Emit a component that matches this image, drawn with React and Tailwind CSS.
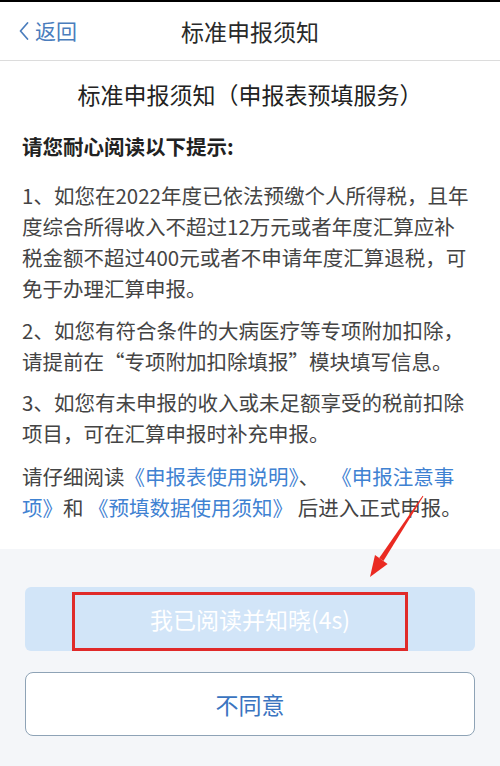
const font = { fontFamily: '"Noto Sans CJK SC", "Noto Sans", sans-serif' };

function Link({ children }) {
  return <span className="text-[#3f82d2]">{children}</span>;
}

export default function App() {
  return (
    <div className="relative flex h-[766px] w-[500px] flex-col overflow-hidden bg-white" style={font}>
      <div className="h-[2px] bg-black" />

      {/* nav bar */}
      <div className="relative flex h-[59px] items-center justify-center border-b border-[#dcdcdc]">
        <div className="absolute left-[19px] top-0 flex h-full items-center gap-[6px] text-[21px] text-[#4a7dbd]">
          <svg width="10" height="18" viewBox="0 0 10 18" fill="none">
            <path d="M8.5 1 L1.5 9 L8.5 17" stroke="#4a7dbd" strokeWidth="1.7" strokeLinecap="round" strokeLinejoin="round" />
          </svg>
          <span>返回</span>
        </div>
        <h1 className="text-[23px] text-[#2a2a2a]">标准申报须知</h1>
      </div>

      {/* content */}
      <div className="flex h-[488px] flex-col px-[22px] pt-[17px] text-[20.5px] leading-[31px] text-[#444]">
        <h2 className="text-center text-[23px] leading-[32px] text-[#222]">标准申报须知（申报表预填服务）</h2>
        <p className="mt-[21px] font-bold text-[#222]">请您耐心阅读以下提示:</p>
        <p className="mt-[18px] whitespace-nowrap">
          1、如您在2022年度已依法预缴个人所得税，且年<br />
          度综合所得收入不超过12万元或者年度汇算应补<br />
          税金额不超过400元或者不申请年度汇算退税，可<br />
          免于办理汇算申报。
        </p>
        <p className="mt-[11px] whitespace-nowrap">
          2、如您有符合条件的大病医疗等专项附加扣除，<br />
          请提前在“专项附加扣除填报”模块填写信息。
        </p>
        <p className="mt-[10px] whitespace-nowrap">
          3、如您有未申报的收入或未足额享受的税前扣除<br />
          项目，可在汇算申报时补充申报。
        </p>
        <p className="mt-[12px] whitespace-nowrap">
          请仔细阅读<Link>《申报表使用说明》</Link>、<span className="inline-block w-[12px]" />
          <Link>《申报注意事</Link>
          <br />
          <Link>项》</Link>和 <Link>《预填数据使用须知》</Link> 后进入正式申报。
        </p>
      </div>

      {/* bottom actions */}
      <div className="flex flex-1 flex-col gap-[21px] bg-[#f4f6f9] px-[25px] pt-[38px]">
        <div className="relative">
          <button className="flex h-[64px] w-full items-center justify-center rounded-[6px] bg-[#d2e5f8] text-[23px] text-white">
            我已阅读并知晓(4s)
          </button>
          <div className="pointer-events-none absolute left-[47px] top-[5px] h-[59px] w-[336px] border-[3px] border-[#e02a2a]" />
        </div>
        <button className="flex h-[64px] w-full items-center justify-center rounded-[8px] border border-[#8ea3b6] bg-white text-[23px] text-[#3a74c0]">
          不同意
        </button>
      </div>

      {/* annotation arrow */}
      <svg className="pointer-events-none absolute left-0 top-0" width="500" height="766" viewBox="0 0 500 766">
        <polygon points="423.4,496.3 422.6,495.7 379.2,558.1 383.4,560.9" fill="#ea2a22" />
        <polygon points="370,577 387.6,564 375,555" fill="#ea2a22" />
      </svg>
    </div>
  );
}
